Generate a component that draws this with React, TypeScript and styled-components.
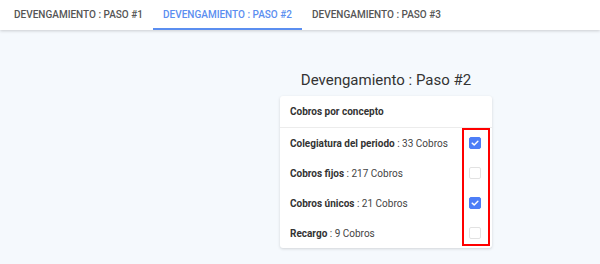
import React from "react";
import styled, { createGlobalStyle } from "styled-components";

const Global = createGlobalStyle`
  html, body { margin: 0; padding: 0; }
  body {
    background: #f5f9fd;
    font-family: Roboto, "Liberation Sans", sans-serif;
    color: #333;
  }
`;

const Page = styled.div`
  width: 600px;
  height: 264px;
  display: flex;
  flex-direction: column;
  overflow: hidden;
`;

const TabBar = styled.nav`
  height: 30px;
  background: #fff;
  display: flex;
  padding-left: 4px;
  box-shadow: 0 1px 3px rgba(0, 0, 0, 0.18);
  position: relative;
  z-index: 1;
`;

const Tab = styled.div<{ $active?: boolean }>`
  padding: 0 10px;
  width: 149px;
  box-sizing: border-box;
  display: flex;
  align-items: center;
  justify-content: center;
  font-size: 10px;
  font-weight: 500;
  text-transform: uppercase;
  color: ${(p) => (p.$active ? "#5b8ef0" : "#555")};
  border-bottom: 2px solid ${(p) => (p.$active ? "#5b8ef0" : "transparent")};
  padding-top: 1px;
  white-space: nowrap;
`;

const Main = styled.main`
  flex: 1;
  display: grid;
  grid-template-columns: 280px 212px 1fr;
  padding-top: 40px;
`;

const Column = styled.section`
  grid-column: 2;
  display: flex;
  flex-direction: column;
  align-items: stretch;
`;

const Title = styled.h2`
  margin: 0 -40px 6px;
  text-align: center;
  font-size: 15px;
  font-weight: 400;
  color: #333;
  line-height: 20px;
`;

const Card = styled.div`
  background: #fff;
  border-radius: 3px;
  box-shadow: 0 1px 3px rgba(0, 0, 0, 0.15);
  position: relative;
`;

const CardHeader = styled.div`
  height: 31px;
  padding: 0 10px;
  display: flex;
  align-items: center;
  font-size: 10px;
  font-weight: 700;
  color: #333;
  border-bottom: 1px solid #ececec;
`;

const Row = styled.div`
  height: 30px;
  padding: 0 11px 0 10px;
  display: flex;
  align-items: center;
  justify-content: space-between;
  font-size: 10px;
  color: #444;
`;

const Label = styled.span`
  white-space: nowrap;
  b {
    font-weight: 700;
    color: #333;
  }
`;

const Box = styled.span<{ $checked?: boolean }>`
  width: 12px;
  height: 12px;
  box-sizing: border-box;
  border-radius: 2px;
  display: inline-flex;
  align-items: center;
  justify-content: center;
  background: ${(p) => (p.$checked ? "#4d7ef7" : "#fff")};
  border: 1px solid ${(p) => (p.$checked ? "#4d7ef7" : "#e2e2e2")};
`;

const Highlight = styled.div`
  position: absolute;
  left: 182px;
  top: 32px;
  width: 28px;
  height: 118px;
  box-sizing: border-box;
  border: 2px solid #ff0000;
  pointer-events: none;
`;

const rows = [
  { name: "Colegiatura del periodo", count: 33, checked: true },
  { name: "Cobros fijos", count: 217, checked: false },
  { name: "Cobros únicos", count: 21, checked: true },
  { name: "Recargo", count: 9, checked: false },
];

const Check = () => (
  <svg width="8" height="8" viewBox="0 0 10 10">
    <path d="M1.5 5.2 L4 7.4 L8.6 2.8" fill="none" stroke="#fff" strokeWidth="1.8" strokeLinecap="round" strokeLinejoin="round" />
  </svg>
);

export default function App() {
  return (
    <Page>
      <Global />
      <TabBar>
        <Tab>Devengamiento : Paso #1</Tab>
        <Tab $active>Devengamiento : Paso #2</Tab>
        <Tab>Devengamiento : Paso #3</Tab>
      </TabBar>
      <Main>
        <Column>
          <Title>Devengamiento : Paso #2</Title>
          <Card>
            <CardHeader>Cobros por concepto</CardHeader>
            {rows.map((r) => (
              <Row key={r.name}>
                <Label>
                  <b>{r.name}</b> : {r.count} Cobros
                </Label>
                <Box $checked={r.checked}>{r.checked && <Check />}</Box>
              </Row>
            ))}
            <Highlight />
          </Card>
        </Column>
      </Main>
    </Page>
  );
}
